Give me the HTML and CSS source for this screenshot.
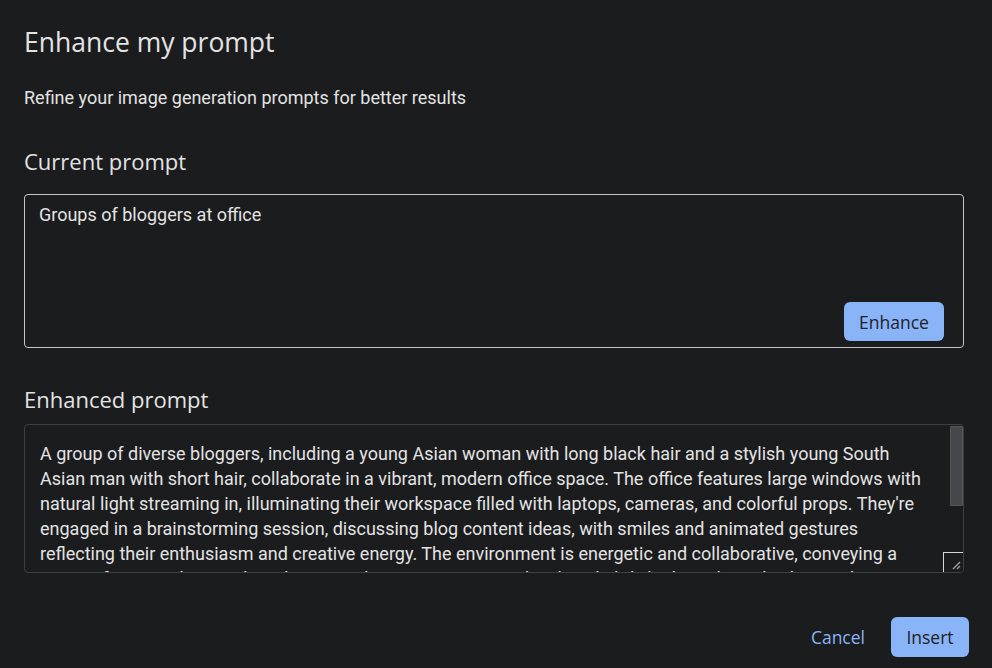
FILE: index.html
```html
<!DOCTYPE html>
<html lang="en">
<head>
<meta charset="utf-8">
<title>Enhance my prompt</title>
<link rel="stylesheet" href="styles.css">
</head>
<body>
<div class="dialog">
  <h1 class="title">Enhance my prompt</h1>
  <p class="subtitle">Refine your image generation prompts for better results</p>

  <h2 class="section-title current-title">Current prompt</h2>
  <div class="current-box">
    <div class="current-text">Groups of bloggers at office</div>
    <div class="current-actions">
      <button class="btn-filled btn-enhance">Enhance</button>
    </div>
  </div>

  <h2 class="section-title enhanced-title">Enhanced prompt</h2>
  <div class="enhanced-box">
    <div class="enhanced-text">A group of diverse bloggers, including a young Asian woman with long black hair and a stylish young South Asian man with short hair, collaborate in a vibrant, modern office space. The office features large windows with natural light streaming in, illuminating their workspace filled with laptops, cameras, and colorful props. They're engaged in a brainstorming session, discussing blog content ideas, with smiles and animated gestures reflecting their enthusiasm and creative energy. The environment is energetic and collaborative, conveying a sense of camaraderie and productivity. The scene is captured with a slightly high-angle, wide shot to showcase the entire team and the lively atmosphere of the workspace.</div>
    <div class="scroll-thumb"></div>
    <div class="resizer">
      <svg width="9" height="9" viewBox="0 0 9 9"><path d="M8 1 L1 8 M8 5 L5 8" stroke="#9aa0a6" stroke-width="1.4" fill="none"/></svg>
    </div>
  </div>

  <div class="footer">
    <button class="btn-text">Cancel</button>
    <button class="btn-filled btn-insert">Insert</button>
  </div>
</div>
</body>
</html>
```

FILE: styles.css
```css
* { box-sizing: border-box; }

html, body {
  margin: 0;
  padding: 0;
  background: #1b1c1e;
  height: 100%;
}

body {
  color: #e3e3e3;
  font-family: Roboto, "Noto Sans", sans-serif;
}

.dialog {
  padding: 24px 23px 0 24px;
}

.title {
  margin: 0;
  font-family: "Open Sans", sans-serif;
  font-weight: 400;
  font-size: 26.5px;
  line-height: 36px;
  color: #e3e3e3;
}

.subtitle {
  margin: 26px 0 0;
  font-size: 18px;
  line-height: 24px;
  color: #e3e3e3;
}

.section-title {
  margin: 0;
  font-family: "Open Sans", sans-serif;
  font-weight: 400;
  font-size: 22px;
  line-height: 32px;
  color: #e3e3e3;
}

.current-title { margin-top: 35px; }

.current-box {
  margin-top: 17px;
  margin-right: 5px;
  height: 154px;
  border: 1px solid #c4c7c5;
  border-radius: 4px;
  padding: 8px 19px 6px 14px;
  display: flex;
  flex-direction: column;
  justify-content: space-between;
}

.current-text {
  font-size: 18px;
  line-height: 24px;
}

.current-actions {
  display: flex;
  justify-content: flex-end;
}

.btn-filled {
  border: none;
  background: #8ab4f8;
  color: #1f2125;
  border-radius: 6px;
  font-family: "Open Sans", sans-serif;
  font-size: 17.5px;
  font-weight: 500;
  cursor: pointer;
}

.btn-enhance {
  width: 100px;
  height: 39px;
}

.enhanced-title { margin-top: 35px; }

.enhanced-box {
  position: relative;
  margin-top: 9px;
  margin-right: 5px;
  height: 149px;
  border: 1px solid #3c4043;
  border-radius: 4px;
  overflow: hidden;
  padding: 16px 30px 0 15px;
}

.enhanced-text {
  font-size: 18px;
  line-height: 25px;
  color: #e3e3e3;
}

.scroll-thumb {
  position: absolute;
  top: 1px;
  right: 0;
  width: 13px;
  height: 80px;
  background: #45474b;
  border: 1px solid #55575b;
  border-radius: 1px;
}

.resizer {
  position: absolute;
  right: 0;
  bottom: 0;
  width: 20px;
  height: 20px;
  border-left: 1px solid #d8d8d8;
  border-top: 1px solid #d8d8d8;
  background: #1b1c1e;
  display: flex;
  align-items: flex-end;
  justify-content: flex-end;
  padding: 0 2px 2px 0;
}

.resizer svg { display: block; }

.footer {
  margin-top: 44px;
  display: flex;
  justify-content: flex-end;
  align-items: center;
  gap: 26px;
}

.btn-text {
  border: none;
  background: transparent;
  color: #8ab4f8;
  font-family: "Open Sans", sans-serif;
  font-size: 17.5px;
  font-weight: 500;
  padding: 0;
  cursor: pointer;
}

.btn-insert {
  width: 78px;
  height: 40px;
}
```
